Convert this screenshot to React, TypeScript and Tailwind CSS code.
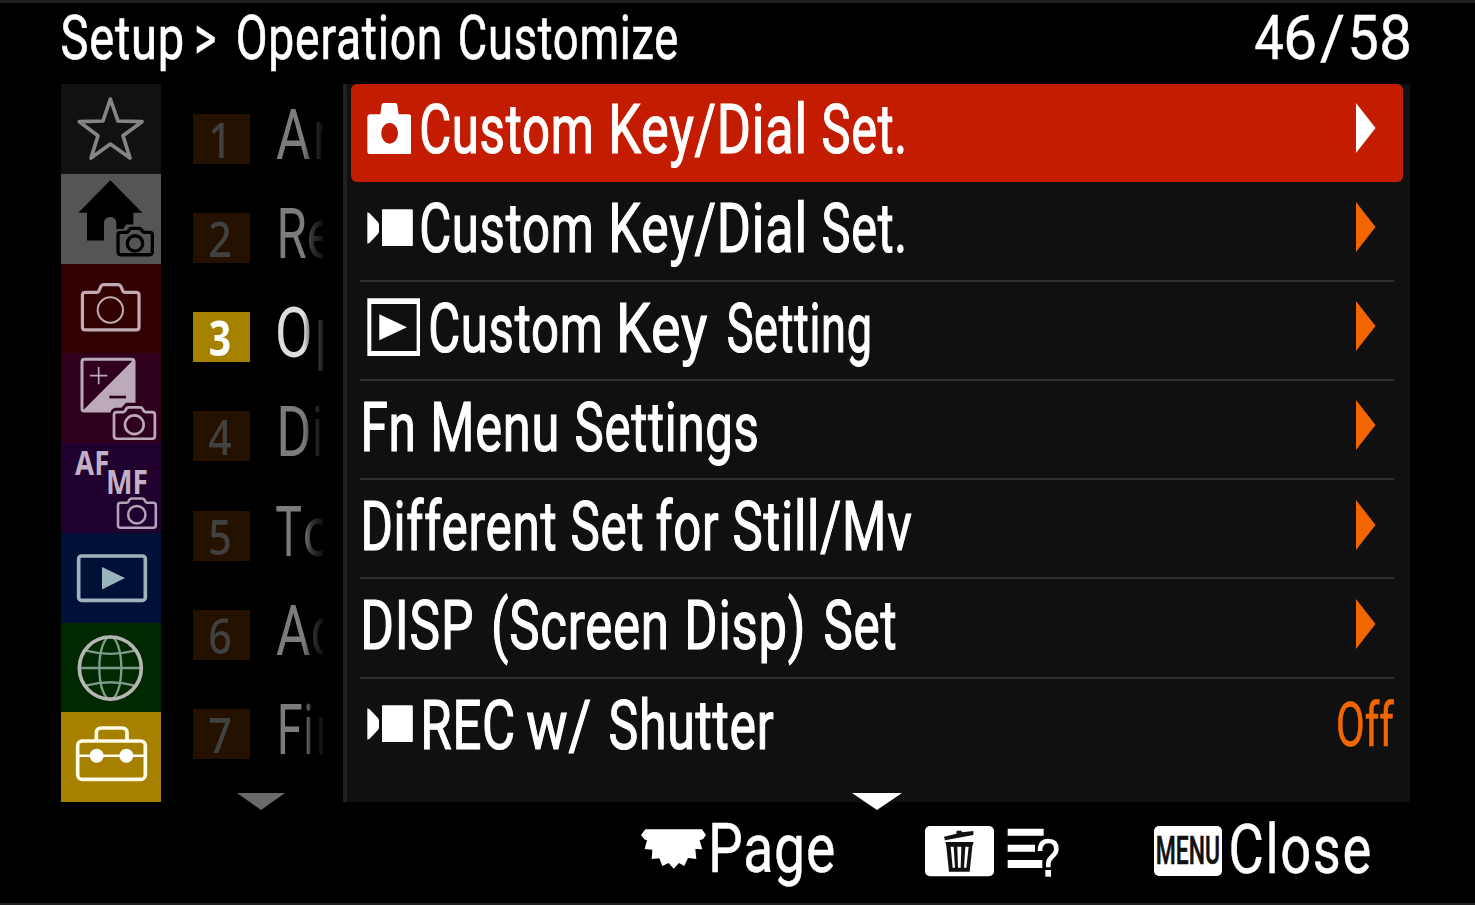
import React from "react";

type Piece = [text: string, x: number, width: number];

const FAMILY = "Roboto";
const ASCENT = 0.9277;
const DESCENT = 0.2441;

const canvas = document.createElement("canvas");

function inkBounds(text: string, size: number, weight: number, spacing: number) {
  const ctx = canvas.getContext("2d")!;
  ctx.font = `${weight} ${size}px ${FAMILY}`;
  (ctx as any).letterSpacing = `${spacing}px`;
  const m = ctx.measureText(text);
  return { left: -m.actualBoundingBoxLeft, right: m.actualBoundingBoxRight };
}

/** One line of condensed text. Each word is squeezed so that its ink fills its given width. */
function Line({
  pieces,
  origin,
  size,
  base,
  weight = 500,
  spacing = 0,
  joined = false,
  className = "",
}: {
  pieces: Piece[];
  origin: number;
  size: number;
  base: number;
  weight?: number;
  spacing?: number;
  joined?: boolean;
  className?: string;
}) {
  const lineHeight = 2 * (base - ASCENT * size) + (ASCENT + DESCENT) * size;
  return (
    <div
      className={`whitespace-pre font-[Roboto,sans-serif] ${className}`}
      style={{
        fontSize: size,
        lineHeight: `${lineHeight}px`,
        height: lineHeight,
        fontWeight: weight,
        letterSpacing: spacing,
        paddingLeft: pieces[0][1] - origin,
      }}
    >
      {pieces.map(([text, x, width], i) => {
        const ink = inkBounds(text, size, weight, spacing);
        const scale = width / (ink.right - ink.left);
        const next = pieces[i + 1];
        return (
          <span key={i} className="inline-block" style={{ width: next ? next[1] - x : width }}>
            <span
              className="inline-block origin-left"
              style={{ transform: `scaleX(${scale}) translateX(${-ink.left}px)` }}
            >
              {text}
              {next && !joined && <span className="text-[10px]"> </span>}
            </span>
          </span>
        );
      })}
    </div>
  );
}

const CAMERA_BODY =
  "M93 642q0 -9 9 -9h35q6 0 8 -6l5 -12q3 -6 9 -6h45q6 0 9 6l5 12q2 6 8 6h34q9 0 9 9v97q0 9 -9 9h-158q-9 0 -9 -9z";

function SmallCamera({ x, y, color, width = 5 }: { x: number; y: number; color: string; width?: number }) {
  return (
    <g transform={`translate(${x} ${y})`} fill="none" stroke={color} strokeWidth={width} strokeLinejoin="round">
      <path d="M0 22q0 -8 8 -8h19q4 0 6 -4l3 -6q2 -4 7 -4h33q5 0 7 4l3 6q2 4 6 4h19q8 0 8 8v64q0 8 -8 8h-103q-8 0 -8 -8z" transform="scale(1.03 1)" />
      <circle cx="61" cy="52" r="28" />
    </g>
  );
}

const TABS: { name: string; color: string; box: string; icon: React.ReactNode }[] = [
  {
    name: "My Menu",
    color: "bg-[#111111]",
    box: "33 12 300 269",
    icon: (
      <path
        d="M181 57L204 123L276 125L219 167L240 234L181 192L123 234L144 167L88 125L159 123Z"
        fill="none"
        stroke="#858585"
        strokeWidth="11"
        strokeLinejoin="round"
      />
    ),
  },
  {
    name: "Main",
    color: "bg-[#555555]",
    box: "33 281 300 269",
    icon: (
      <g>
        <path d="M181 300L277 397H250V480H199V430Q199 410 181 410Q162 410 162 430V480H111V397H85Z" fill="#000" />
        <path d="M193 490V459Q193 446 206 446H220L228 432H280L290 446H304Q318 448 318 462V532H193Z" fill="#555555" />
        <g fill="none" stroke="#000" strokeWidth="10" strokeLinejoin="round">
          <path d="M204 464q0-8 8-8h17q4 0 6-4l3-4q2-4 6-4h24q4 0 6 4l3 4q2 4 6 4h16q8 0 8 8v51q0 8-8 8h-87q-8 0-8-8z" />
          <circle cx="255" cy="489" r="23" />
        </g>
      </g>
    ),
  },
  {
    name: "Shooting",
    color: "bg-[#320000]",
    box: "33 550 300 269",
    icon: (
      <g fill="none" stroke="#c0abb4" strokeLinejoin="round">
        <path d={CAMERA_BODY} transform="translate(7.500 18) scale(.965 .975)" strokeWidth="10" />
        <circle cx="181" cy="688" r="38" strokeWidth="6" />
      </g>
    ),
  },
  {
    name: "Exposure/Color",
    color: "bg-[#2f001c]",
    box: "33 11 300 269",
    icon: (
      <g>
        <path d="M98 184L250 32V184Z" fill="#bba9b9" />
        <rect x="96" y="30" width="156" height="155" rx="7" fill="none" stroke="#bba9b9" strokeWidth="9" />
        <path d="M120 79H172M146 53V105" stroke="#bba9b9" strokeWidth="5" />
        <path d="M178 143H228" stroke="#2f001c" strokeWidth="8" />
        <path d="M182 190V188Q184 178 196 175H214L228 160H276L282 190V262H184Z" fill="#2f001c" />
        <SmallCamera x={192} y={174} color="#bba9b9" width={8} />
      </g>
    ),
  },
  {
    name: "Focus",
    color: "bg-[#1f002f]",
    box: "33 280 300 269",
    icon: (
      <g>
        <g fill="#c2b0c4" fontFamily="Noto Sans, sans-serif" fontWeight="700" fontSize="102">
          <text x="75" y="376" textLength="103" lengthAdjust="spacingAndGlyphs">AF</text>
          <text x="168" y="432" textLength="126" lengthAdjust="spacingAndGlyphs">MF</text>
        </g>
        <g transform="translate(204 446) scale(.925 .94)">
          <SmallCamera x={0} y={0} color="#b2a3b9" width={8} />
        </g>
      </g>
    ),
  },
  {
    name: "Playback",
    color: "bg-[#001036]",
    box: "33 548 300 269",
    icon: (
      <g>
        <rect x="86" y="617" width="200" height="133" rx="9" fill="none" stroke="#9ab4bf" strokeWidth="11" />
        <path d="M156 650L225 683L156 717Z" fill="#9ab4bf" />
      </g>
    ),
  },
  {
    name: "Network",
    color: "bg-[#002900]",
    box: "33 38 300 269",
    icon: (
      <g fill="none" stroke="#7f9a8b" strokeWidth="7">
        <ellipse cx="181" cy="173" rx="33" ry="94" />
        <path d="M88 173H275M108 121Q181 140 254 121M108 226Q181 205 254 226" />
        <circle cx="181" cy="173" r="93" stroke="#b5b5b5" strokeWidth="11" />
      </g>
    ),
  },
  {
    name: "Setup",
    color: "bg-[#a68100]",
    box: "33 307 300 269",
    icon: (
      <g fill="none" stroke="#fffbe9" strokeWidth="11">
        <rect x="83" y="394" width="203" height="115" rx="14" />
        <path d="M139 391V370Q139 355 154 355H216Q231 355 231 370V391" />
        <path d="M84 438H286" strokeWidth="7" />
        <g fill="#fff" stroke="none">
          <circle cx="140" cy="438" r="21" />
          <circle cx="229" cy="438" r="21" />
        </g>
      </g>
    ),
  },
];

const GROUPS: { number: number; pieces: Piece[] }[] = [
  { number: 1, pieces: [["A", 276, 34], ["r", 315.7, 13]] },
  { number: 2, pieces: [["R", 279.7, 26], ["e", 309, 24]] },
  { number: 3, pieces: [["O", 278, 32], ["p", 317.5, 24]] },
  { number: 4, pieces: [["D", 279.7, 28.5], ["i", 315.5, 5]] },
  { number: 5, pieces: [["T", 276, 25.5], ["o", 305, 26]] },
  { number: 6, pieces: [["A", 276, 34], ["c", 313, 23]] },
  { number: 7, pieces: [["F", 279.7, 21.5], ["i", 306.5, 5], ["n", 319.5, 20]] },
];

const StillIcon = () => (
  <svg viewBox="80 69 133 154" className="h-[51.3px] w-[44.3px]" preserveAspectRatio="none">
    <path
      fillRule="evenodd"
      fill="#fff"
      d="M120 103L124 74Q125 69 130 69H165Q170 69 171 74L175 103H204Q213 103 213 112V214Q213 223 204 223H90Q81 223 81 214V112Q81 103 90 103ZM148 129C134 129 123 143 123 160S134 191 148 191S173 177 173 160S162 129 148 129Z"
    />
  </svg>
);

const MovieIcon = () => (
  <svg viewBox="80 386 138 112" className="h-[37.3px] w-[46px]" preserveAspectRatio="none">
    <path d="M81 396L88 399L112 424Q116 428 116 433V453Q116 458 112 462L88 487L81 490Z" fill="#fff" />
    <rect x="125" y="387" width="92.500" height="111" rx="3" fill="#fff" />
  </svg>
);

const PlayIcon = () => (
  <svg viewBox="80 653 160 176" className="h-[58.700px] w-[53.300px]" preserveAspectRatio="none">
    <path d="M81 654H240V829H81ZM93 671V812H229V671Z" fill="#fff" fillRule="evenodd" />
    <path d="M117 702L200 741L117 780Z" fill="#fff" />
  </svg>
);

const ITEMS: { icon?: React.ReactNode; iconTop?: string; pieces: Piece[]; value?: Piece[] }[] = [
  {
    icon: <StillIcon />,
    iconTop: "pt-[19px]",
    pieces: [["Custom", 422, 168.5], ["Key/Dial", 611.5, 191.5], ["Set.", 822.5, 80.5]],
  },
  {
    icon: <MovieIcon />,
    iconTop: "pt-[26.500px]",
    pieces: [["Custom", 422, 168.5], ["Key/Dial", 611.5, 191.5], ["Set.", 822.5, 80.5]],
  },
  {
    icon: <PlayIcon />,
    iconTop: "pt-[16px]",
    pieces: [["Custom", 430.5, 168.5], ["Key", 620, 87], ["Setting", 728, 141.5]],
  },
  { pieces: [["Fn", 364, 49], ["Menu", 434, 122.5], ["Settings", 576, 181]] },
  { pieces: [["Different", 364, 191.5], ["Set", 571.5, 70.5], ["for", 656.5, 61.5], ["Still/Mv", 734, 177.5]] },
  { pieces: [["DISP", 364, 107.500], ["(Screen", 494, 172], ["Disp)", 687.5, 114.5], ["Set", 825, 70.5]] },
  {
    icon: <MovieIcon />,
    iconTop: "pt-[26px]",
    pieces: [["REC", 423.5, 89], ["w/", 527, 63], ["Shutter", 609.5, 163.5]],
    value: [["Off", 1337.5, 56]],
  },
];

function Arrow({ className }: { className: string }) {
  return (
    <svg viewBox="0 0 20 50" className={`h-[50px] w-5 shrink-0 ${className}`}>
      <path d="M0 0L19.500 25L0 50Z" fill="currentColor" />
    </svg>
  );
}

function DownArrow({ className }: { className: string }) {
  return (
    <svg viewBox="0 0 50 17" preserveAspectRatio="none" className={`absolute h-[17px] ${className}`}>
      <path d="M0 0H50L25 17Z" fill="currentColor" />
    </svg>
  );
}

function Header() {
  return (
    <header className="flex h-[81px] justify-between text-white">
      <Line
        origin={0}
        size={62}
        base={56.5}
        weight={400}
        spacing={1}
        className="[-webkit-text-stroke:0.7px]"
        pieces={[["Setup", 62, 120], [">", 196.5, 17.5], ["Operation", 238, 202], ["Customize", 459.5, 217]]}
      />
      <Line
        origin={1254}
        size={62}
        base={56.5}
        weight={400}
        joined
        className="w-[221px] shrink-0 [-webkit-text-stroke:0.5px]"
        pieces={[["4", 1254.5, 28], ["6", 1286.5, 27.5], ["/", 1320, 23.5], ["5", 1351, 26], ["8", 1382, 27.2]]}
      />
    </header>
  );
}

function Tabs() {
  return (
    <nav className="flex w-[100px] shrink-0 flex-col">
      {TABS.map((tab) => (
        <div key={tab.name} className={`min-h-0 flex-1 ${tab.color}`}>
          <svg viewBox={tab.box} preserveAspectRatio="none" className="block h-full w-full">
            {tab.icon}
          </svg>
        </div>
      ))}
    </nav>
  );
}

function Groups() {
  return (
    <div className="relative w-[182px] shrink-0 pt-[0.500px]">
      {GROUPS.map(({ number, pieces }) => {
        const active = number === 3;
        return (
          <div key={number} className="flex h-[99.250px] pl-8">
            <div
              className={`mt-[29px] flex h-[50px] w-[57px] shrink-0 items-center justify-center pr-[3px] font-['Noto_Sans',sans-serif] text-[49px] leading-[50px] ${
                active ? "bg-[#a68100] font-bold text-white" : "bg-[#251100] font-medium text-[#414141]"
              }`}
            >
              <span className={active ? "scale-x-[.8]" : "scale-x-[.84]"}>{number}</span>
            </div>
            <div className="w-[73px] shrink-0 overflow-hidden [mask-image:linear-gradient(to_right,black_74%,rgba(0,0,0,.42)_84%,rgba(0,0,0,.12)_100%)]">
              <Line
                origin={250}
                size={70}
                base={74}
                weight={400}
                joined
                pieces={pieces}
                className={active ? "text-[#dddddd]" : "text-[#7c7c7c]"}
              />
            </div>
          </div>
        );
      })}
      <DownArrow className="left-[76px] top-[709px] w-[48px] text-[#6a6a6a]" />
    </div>
  );
}

function MenuPanel() {
  return (
    <main className="relative w-[1067px] shrink-0 border-l-4 border-[#222222] bg-[#101010] pl-1">
      {ITEMS.map((item, i) => (
        <div
          key={i}
          className={`flex justify-between ${
            i === 0
              ? "h-[98.300px] w-[1052px] rounded-md bg-[#c31c00]"
              : "ml-[9px] h-[99.300px] w-[1034px]"
          } ${i > 0 && i < 6 ? "border-b-2 border-[#303030]" : ""}`}
        >
          <div className="flex text-white">
            {item.icon && (
              <div className={`shrink-0 ${item.iconTop} ${i === 0 ? "w-[62px] pl-[15.500px]" : "w-[60px] pl-[6.500px]"}`}>
                {item.icon}
              </div>
            )}
            <Line
              origin={item.icon ? (i === 0 ? 413 : 420) : 360}
              size={69}
              base={i === 0 ? 69.1 : 70.1}
              weight={400}
              spacing={1}
              className="[-webkit-text-stroke:1.2px]"
              pieces={item.pieces}
            />
          </div>
          {item.value ? (
            <Line
              origin={1330}
              size={62}
              base={67.5}
              weight={400}
              pieces={item.value}
              className="w-16 shrink-0 text-[#f26600] [-webkit-text-stroke:0.7px]"
            />
          ) : (
            <Arrow className={i === 0 ? "mr-[27px] mt-[18.500px] text-white" : "mr-[18px] mt-[19.500px] text-[#f26600]"} />
          )}
        </div>
      ))}
      <DownArrow className="left-[505px] top-[709px] w-[50px] text-white" />
    </main>
  );
}

function Footer() {
  return (
    <footer className="flex h-[101px] text-white">
      <svg viewBox="62 147 196 119" className="ml-[640.500px] mt-[27px] h-[39.700px] w-[65.300px] shrink-0" preserveAspectRatio="none">
        <path
          fill="#fff"
          d="M75 148H245L257 165L248 178L238 180L246 208L225 207L228 237L203 234L192 258L176 249L160 266L145 249L126 258L117 235L94 237L96 209L73 207L80 181L72 178L62 165Z"
        />
      </svg>
      <Line
        origin={706}
        size={68}
        base={71}
        weight={400}
        spacing={1}
        pieces={[["Page", 712.5, 121.5]]}
        className="w-[219.300px] shrink-0 [-webkit-text-stroke:0.5px]"
      />
      <svg viewBox="916 139 207 151" className="mt-[24.300px] h-[50.300px] w-[69px] shrink-0" preserveAspectRatio="none">
        <rect x="916" y="139" width="207" height="151" rx="15" fill="#fff" />
        <path d="M973 171L1010 162L1011 153H1025L1027 158L1061 154V166L976 182Z" fill="#111" />
        <path
          fillRule="evenodd"
          fill="#111"
          d="M977 187H1062L1058 200L1050 276H988L980 200ZM993 201L999 264H1006L1002 201ZM1013 201L1015 264H1023L1025 201ZM1037 201L1033 264H1040L1047 201Z"
        />
      </svg>
      <svg viewBox="1162 145 156 147" className="ml-[13px] mt-[26.300px] h-[49px] w-[52px] shrink-0" preserveAspectRatio="none">
        <path d="M1164 147H1272V168H1164ZM1164 195H1246V216H1164ZM1164 241H1268V265H1164Z" fill="#fff" />
        <path d="M1261 214Q1261 184 1286 184Q1310 184 1310 208Q1310 220 1296 232Q1286 241 1286 251V263" fill="none" stroke="#fff" strokeWidth="14" />
        <rect x="1277" y="271" width="17" height="20" fill="#fff" />
      </svg>
      <div className="ml-[94.500px] mt-[24px] h-[50px] w-[68px] shrink-0 rounded-[5px] bg-white">
        <Line origin={1153.7} size={38} base={38.8} weight={500} pieces={[["MENU", 1157, 62]]} className="text-[#111111] [-webkit-text-stroke:0.6px]" />
      </div>
      <Line
        origin={1221.7}
        size={68}
        base={72}
        weight={400}
        spacing={2}
        className="[-webkit-text-stroke:0.5px]"
        pieces={[["Close", 1231.5, 138.5]]}
      />
    </footer>
  );
}

export default function App() {
  return (
    <div className="h-[905px] w-[1475px] overflow-hidden border-b-2 border-t-[3px] border-[#202020] bg-black">
      <Header />
      <div className="flex h-[718px] pl-[61px]">
        <Tabs />
        <Groups />
        <MenuPanel />
      </div>
      <Footer />
    </div>
  );
}
